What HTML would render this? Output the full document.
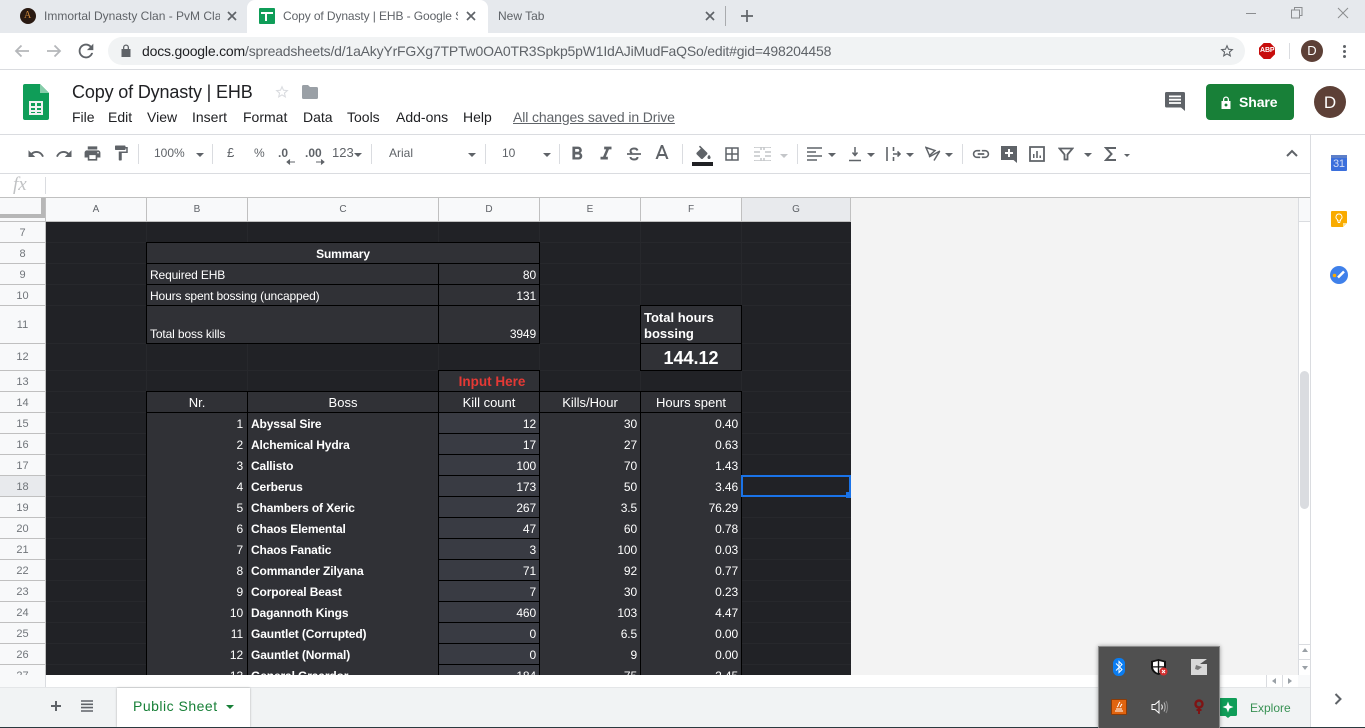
<!DOCTYPE html>
<html><head><meta charset="utf-8"><title>Copy of Dynasty | EHB</title>
<style>
html,body{margin:0;padding:0;width:1365px;height:728px;overflow:hidden;background:#fff;font-family:"Liberation Sans",sans-serif}
div,span,svg{position:absolute}
.t{white-space:nowrap;line-height:1}
svg{display:block}
.ic{fill:#5f6368}
.sep{width:1px;height:20px;top:144px;background:#dadce0}
.dd{width:0;height:0;border-left:4px solid transparent;border-right:4px solid transparent;border-top:4px solid #5f6368}
.m{top:109px;font-size:14px;color:#202124;white-space:nowrap;line-height:16px}
.ch{top:198px;height:23px;border-right:1px solid #c0c0c0;background:#f8f9fa;text-align:center;font-size:10px;line-height:24px;color:#5f6368;box-sizing:content-box}
.rh{left:0;width:45px;border-right:1px solid #c0c0c0;border-bottom:1px solid #c0c0c0;background:#f8f9fa;text-align:center;font-size:11px;color:#70757a}
.gv{top:222px;height:453px;width:1px;background:#27282c}
.gh{left:46px;width:805px;height:1px;background:#27282c}
.c{box-sizing:border-box;border:1px solid #000;background:#303136;color:#fff;font-size:12px;white-space:nowrap;overflow:hidden}
.x{color:#fff;font-size:12px;line-height:14px;white-space:nowrap;margin-top:1px;letter-spacing:-.13px}
.h{font-size:13px;line-height:15px;margin-top:0;letter-spacing:0;text-align:center}
.r{text-align:right}
.b{font-weight:bold}
.tb{top:146px;font-size:12px;color:#5f6368;white-space:nowrap;line-height:14px}
</style></head><body>

<!-- browser tabs -->
<div style="left:0;top:0;width:1365px;height:33px;background:#e6e9ed"></div>
<div style="left:247px;top:0;width:241px;height:33px;background:#fff;border-radius:8px 8px 0 0"></div>
<div style="left:20px;top:8px;width:16px;height:16px;border-radius:8px;background:#2a1a12"></div>
<div class="t" style="left:24px;top:11px;font-size:10px;color:#d08a3c;font-family:'Liberation Serif',serif">A</div>
<div class="t" style="left:44px;top:9px;width:176px;overflow:hidden;font-size:12px;line-height:14px;color:#5f6368">Immortal Dynasty Clan - PvM Clan</div>
<svg style="left:227px;top:11px" width="10" height="10"><path d="M1 1L9 9M9 1L1 9" stroke="#5f6368" stroke-width="1.7"/></svg>
<div style="left:259px;top:8px;width:16px;height:16px;background:#0f9d58;border-radius:1px"></div>
<div style="left:261px;top:12px;width:12px;height:2px;background:#fff"></div>
<div style="left:265px;top:12px;width:2px;height:9px;background:#fff"></div>
<div class="t" style="left:283px;top:9px;width:175px;overflow:hidden;font-size:12px;line-height:14px;letter-spacing:-.1px;color:#5f6368">Copy of Dynasty | EHB - Google Sheets</div>
<svg style="left:466px;top:11px" width="10" height="10"><path d="M1 1L9 9M9 1L1 9" stroke="#5f6368" stroke-width="1.7"/></svg>
<div class="t" style="left:498px;top:9px;font-size:12px;line-height:14px;color:#5f6368">New Tab</div>
<svg style="left:705px;top:11px" width="10" height="10"><path d="M1 1L9 9M9 1L1 9" stroke="#5f6368" stroke-width="1.7"/></svg>
<div style="left:725px;top:6px;width:1px;height:20px;background:#a9abae"></div>
<svg style="left:741px;top:10px" width="12" height="12"><path d="M6 0V12M0 6H12" stroke="#5f6368" stroke-width="1.7"/></svg>
<div style="left:1246px;top:13px;width:10px;height:1px;background:#8b8d90"></div>
<svg style="left:1291px;top:7px" width="12" height="12"><path d="M3.5 2.5V.5H11V8.500H9M.5 3H8.500V11H.5Z" fill="none" stroke="#8b8d90"/></svg>
<svg style="left:1337px;top:7px" width="12" height="12"><path d="M1 1L11 11M11 1L1 11" stroke="#8b8d90"/></svg>

<!-- address bar -->
<div style="left:0;top:33px;width:1365px;height:36px;background:#fff"></div>
<div style="left:0;top:69px;width:1365px;height:1px;background:#dadce0"></div>
<div style="left:108px;top:37px;width:1137px;height:28px;background:#f1f3f4;border-radius:14px"></div>
<svg style="left:14px;top:44px" width="16" height="14"><path d="M15 7H2M7.500 1.500L2 7l5.500 5.500" fill="none" stroke="#b5b7ba" stroke-width="1.800"/></svg>
<svg style="left:46px;top:44px" width="16" height="14"><path d="M1 7H14M8.500 1.500L14 7l-5.500 5.500" fill="none" stroke="#b5b7ba" stroke-width="1.800"/></svg>
<svg style="left:75px;top:40px" width="22" height="22" viewBox="0 0 24 24"><path fill="#5f6368" d="M17.650 6.350C16.200 4.900 14.210 4 12 4c-4.420 0-7.990 3.580-7.990 8s3.570 8 7.990 8c3.730 0 6.840-2.550 7.730-6h-2.080c-.82 2.330-3.040 4-5.650 4-3.310 0-6-2.690-6-6s2.690-6 6-6c1.660 0 3.140.69 4.220 1.780L13 11h7V4l-2.350 2.350z"/></svg>
<svg style="left:121px;top:44px" width="10" height="13"><path fill="#5f6368" d="M2 5V3.500a3 3 0 0 1 6 0V5h1.500v8H.5V5zM3.300 5h3.400V3.500a1.700 1.700 0 0 0-3.400 0z"/></svg>
<div class="t" style="left:142px;top:43px;font-size:14px;line-height:16px;letter-spacing:-.19px;color:#5f6368"><span style="position:static;color:#202124">docs.google.com</span>/spreadsheets/d/1aAkyYrFGXg7TPTw0OA0TR3Spkp5pW1IdAJiMudFaQSo/edit#gid=498204458</div>
<svg style="left:1219px;top:43px" width="16" height="16" viewBox="0 0 24 24"><path fill="#5f6368" d="M22 9.240l-7.190-.62L12 2 9.190 8.630 2 9.240l5.460 4.730L5.820 21 12 17.270 18.180 21l-1.630-7.030L22 9.240zM12 15.400l-3.760 2.270 1-4.280-3.320-2.880 4.380-.38L12 6.100l1.710 4.040 4.380.38-3.320 2.880 1 4.280L12 15.400z"/></svg>
<svg style="left:1259px;top:43px" width="16" height="16"><path fill="#c70d0c" d="M4.700 0h6.600L16 4.700v6.600L11.300 16H4.700L0 11.300V4.700z"/></svg>
<div class="t b" style="left:1260px;top:47px;font-size:7px;line-height:8px;font-weight:bold;letter-spacing:-.1px;color:#fff">ABP</div>
<div style="left:1289px;top:43px;width:1px;height:16px;background:#dadce0"></div>
<div style="left:1301px;top:40px;width:22px;height:22px;border-radius:11px;background:#5d4037;color:#fff;text-align:center;font-size:13px;line-height:22px">D</div>
<div style="left:1343px;top:45px;width:3px;height:3px;border-radius:2px;background:#5f6368"></div>
<div style="left:1343px;top:50px;width:3px;height:3px;border-radius:2px;background:#5f6368"></div>
<div style="left:1343px;top:55px;width:3px;height:3px;border-radius:2px;background:#5f6368"></div>

<!-- doc header -->
<svg style="left:23px;top:84px" width="26" height="36"><path fill="#0f9d58" d="M2 0H17L26 9V34a2 2 0 0 1-2 2H2a2 2 0 0 1-2-2V2a2 2 0 0 1 2-2z"/><path fill="#87cdaa" d="M17 0L26 9H17z"/><path fill="#f1f1f1" d="M6 17H20V31H6zM8 19V22H12V19zM14 19V22H18V19zM8 24V26H12V24zM14 24V26H18V24zM8 28V29H12V28zM14 28V29H18V28z" fill-rule="evenodd"/></svg>
<div style="left:72px;top:81px;font-size:18px;line-height:22px;letter-spacing:-.15px;color:#202124;white-space:nowrap">Copy of Dynasty | EHB</div>
<svg style="left:274px;top:84px" width="16" height="16" viewBox="0 0 24 24"><path fill="#dadce0" d="M22 9.240l-7.190-.62L12 2 9.190 8.630 2 9.240l5.460 4.730L5.820 21 12 17.270 18.180 21l-1.630-7.030L22 9.240zM12 15.400l-3.760 2.270 1-4.280-3.320-2.880 4.380-.38L12 6.100l1.710 4.040 4.380.38-3.320 2.880 1 4.280L12 15.400z"/></svg>
<svg style="left:302px;top:85px" width="16" height="14"><path fill="#9aa0a6" d="M1.500 0H6L8 2H14.500A1.500 1.500 0 0 1 16 3.500V12.500A1.500 1.500 0 0 1 14.500 14H1.500A1.500 1.500 0 0 1 0 12.500V1.500A1.500 1.500 0 0 1 1.500 0z"/></svg>
<div class="m" style="left:72px">File</div>
<div class="m" style="left:108px">Edit</div>
<div class="m" style="left:147px">View</div>
<div class="m" style="left:192px">Insert</div>
<div class="m" style="left:243px">Format</div>
<div class="m" style="left:303px">Data</div>
<div class="m" style="left:347px">Tools</div>
<div class="m" style="left:396px">Add-ons</div>
<div class="m" style="left:463px">Help</div>
<div class="m" style="left:513px;color:#5f6368;letter-spacing:-.12px;text-decoration:underline">All changes saved in Drive</div>
<svg style="left:1165px;top:92px" width="20" height="20"><path fill="#5f6368" d="M1.500 0H18.500A1.500 1.500 0 0 1 20 1.500V19L16 15.500H1.500A1.500 1.500 0 0 1 0 14V1.500A1.500 1.500 0 0 1 1.500 0z"/><path fill="#fff" d="M4 3.500H16V5.300H4zM4 6.800H16V8.600H4zM4 10.100H16V11.900H4z"/></svg>
<div style="left:1206px;top:84px;width:88px;height:36px;background:#188038;border-radius:4px"></div>
<svg style="left:1221px;top:96px" width="10" height="13"><path fill="#fff" d="M2 5V3.500a3 3 0 0 1 6 0V5h1.500v8H.5V5zM3.300 5h3.400V3.500a1.700 1.700 0 0 0-3.400 0zM5 7.500a1.500 1.500 0 1 0 .01 0z" fill-rule="evenodd"/></svg>
<div style="left:1239px;top:94px;font-size:14px;line-height:16px;font-weight:bold;letter-spacing:-.1px;color:#fff">Share</div>
<div style="left:1314px;top:86px;width:32px;height:32px;border-radius:16px;background:#5d4037;color:#fff;text-align:center;font-size:17px;line-height:33px">D</div>
<div style="left:0;top:134px;width:1365px;height:1px;background:#dadce0"></div>

<!-- toolbar -->
<svg class="ic" style="left:27px;top:145px" width="18" height="18" viewBox="0 0 24 24"><path d="M12.500 8c-2.650 0-5.050.99-6.900 2.600L2 7v9h9l-3.620-3.620c1.390-1.160 3.160-1.880 5.120-1.880 3.540 0 6.550 2.310 7.600 5.500l2.370-.78C21.080 11.030 17.150 8 12.500 8z"/></svg>
<svg class="ic" style="left:55px;top:145px" width="18" height="18" viewBox="0 0 24 24"><path d="M18.400 10.600C16.550 8.990 14.150 8 11.500 8c-4.650 0-8.580 3.030-9.960 7.220L3.900 16c1.050-3.190 4.050-5.500 7.600-5.500 1.950 0 3.730.72 5.120 1.880L13 16h9V7l-3.600 3.600z"/></svg>
<svg class="ic" style="left:83px;top:144px" width="19" height="19" viewBox="0 0 24 24"><path d="M19 8H5c-1.660 0-3 1.340-3 3v6h4v4h12v-4h4v-6c0-1.660-1.340-3-3-3zm-3 11H8v-5h8v5zm3-7c-.55 0-1-.45-1-1s.45-1 1-1 1 .45 1 1-.45 1-1 1zm-1-9H6v4h12V3z"/></svg>
<svg class="ic" style="left:112px;top:144px" width="18" height="18" viewBox="0 0 24 24"><path d="M18 4V3c0-.55-.45-1-1-1H5c-.55 0-1 .45-1 1v4c0 .55.45 1 1 1h12c.55 0 1-.45 1-1V6h1v4H9v11c0 .55.45 1 1 1h2c.55 0 1-.45 1-1v-9h8V4h-3z"/></svg>
<div class="sep" style="left:138px"></div>
<div class="tb" style="left:154px">100%</div>
<div class="dd" style="left:196px;top:153px"></div>
<div class="sep" style="left:212px"></div>
<div class="tb" style="left:227px;font-size:13px">£</div>
<div class="tb" style="left:254px;font-size:12px">%</div>
<div class="tb" style="left:278px;font-size:12px;font-weight:bold">.0</div>
<svg style="left:286px;top:159px" width="9" height="6"><path d="M9 3H2M4 .5L1 3l3 2.500" fill="#5f6368" stroke="#5f6368"/></svg>
<div class="tb" style="left:305px;font-size:12px;font-weight:bold">.00</div>
<svg style="left:316px;top:159px" width="9" height="6"><path d="M0 3H7M5 .5L8 3 5 5.500" fill="#5f6368" stroke="#5f6368"/></svg>
<div class="tb" style="left:332px;font-size:13px">123</div>
<div class="dd" style="left:354px;top:153px"></div>
<div class="sep" style="left:371px"></div>
<div class="tb" style="left:389px">Arial</div>
<div class="dd" style="left:468px;top:153px"></div>
<div class="sep" style="left:485px"></div>
<div class="tb" style="left:502px">10</div>
<div class="dd" style="left:543px;top:153px"></div>
<div class="sep" style="left:559px"></div>
<svg class="ic" style="left:566px;top:143px" width="22" height="22" viewBox="0 0 24 24"><path d="M15.600 10.790c.97-.67 1.650-1.770 1.650-2.790 0-2.260-1.750-4-4-4H7v14h7.040c2.090 0 3.710-1.700 3.710-3.790 0-1.520-.86-2.820-2.150-3.420zM10 6.500h3c.83 0 1.500.67 1.500 1.500s-.67 1.500-1.500 1.500h-3v-3zm3.500 9H10v-3h3.500c.83 0 1.500.67 1.500 1.500s-.67 1.500-1.500 1.500z"/></svg>
<svg class="ic" style="left:595px;top:143px" width="22" height="22" viewBox="0 0 24 24"><path d="M10 4v3h2.210l-3.420 8H6v3h8v-3h-2.210l3.420-8H18V4z"/></svg>
<svg style="left:626px;top:146px" width="16" height="16"><path d="M11.500 4.500C11 3 9.500 2.500 8 2.500 6 2.500 4.500 3.500 4.500 5c0 1 .6 1.700 1.500 2.200M11.500 11C11.500 12.700 10 13.500 8 13.500 6 13.500 4.500 12.500 4.500 11" fill="none" stroke="#5f6368" stroke-width="2"/><path d="M1 8H15" stroke="#5f6368" stroke-width="1.700"/></svg>
<svg class="ic" style="left:650px;top:142px" width="24" height="24" viewBox="0 0 24 24"><path d="M11 3L5.500 17h2.250l1.120-3h6.250l1.120 3h2.250L13 3h-2zm-1.380 9L12 5.670 14.380 12H9.620z"/></svg>
<div class="sep" style="left:682px"></div>
<svg class="ic" style="left:694px;top:145px" width="19" height="17" viewBox="0 0 24 20"><path d="M16.560 8.940L7.620 0 6.210 1.410l2.380 2.380-5.150 5.150c-.59.59-.59 1.540 0 2.120l5.500 5.500c.29.29.68.44 1.060.44s.77-.15 1.060-.44l5.500-5.500c.59-.58.59-1.530 0-2.120zM19 11.500s-2 2.170-2 3.500c0 1.100.9 2 2 2s2-.9 2-2c0-1.330-2-3.500-2-3.500z"/></svg>
<div style="left:692px;top:162px;width:21px;height:4px;background:#202124"></div>
<svg class="ic" style="left:723px;top:145px" width="18" height="18" viewBox="0 0 24 24"><path d="M3 3v18h18V3H3zm8 16H5v-6h6v6zm0-8H5V5h6v6zm8 8h-6v-6h6v6zm0-8h-6V5h6v6z"/></svg>
<svg style="left:754px;top:147px" width="17" height="14"><path d="M0 1V0H17V1M0 13V14H17V13M7 0V3M10 0V3M7 11V14M10 11V14M0 5H6M11 5H17M0 9H6M11 9H17" fill="none" stroke="#c4c6c9" stroke-width="1.500"/></svg>
<div class="dd" style="left:780px;top:154px;border-top-color:#c4c6c9"></div>
<div class="sep" style="left:797px"></div>
<svg style="left:807px;top:147px" width="15" height="14"><path d="M0 1H15M0 5H9M0 9H15M0 13H10" stroke="#5f6368" stroke-width="1.600"/></svg>
<div class="dd" style="left:828px;top:153px"></div>
<svg style="left:848px;top:146px" width="14" height="16"><path d="M7 1V8.500M4.500 6.500L7 9.500 9.500 6.500M1 14.500H13" fill="none" stroke="#5f6368" stroke-width="1.500"/></svg>
<div class="dd" style="left:867px;top:153px"></div>
<svg style="left:886px;top:146px" width="15" height="16"><path d="M1 1V15M7.500 1V5M7.500 11V15M7 8H14M11.500 5.500L14 8 11.500 10.500" fill="none" stroke="#5f6368" stroke-width="1.600"/></svg>
<div class="dd" style="left:906px;top:153px"></div>
<svg style="left:925px;top:146px" width="16" height="16"><path d="M1 1.500L10 4.500 4.500 9.500zM4 11L15 5M9 14.500L14.500 5.500" fill="none" stroke="#5f6368" stroke-width="1.500"/></svg>
<div class="dd" style="left:945px;top:153px"></div>
<div class="sep" style="left:962px"></div>
<svg class="ic" style="left:971px;top:145px" width="20" height="18" viewBox="0 0 24 22"><path d="M3.900 11c0-1.710 1.390-3.100 3.100-3.100h4V6H7c-2.760 0-5 2.240-5 5s2.240 5 5 5h4v-1.900H7c-1.710 0-3.100-1.390-3.100-3.100zM8 12h8v-2H8v2zm9-6h-4v1.900h4c1.710 0 3.100 1.390 3.100 3.100s-1.390 3.100-3.100 3.100h-4V16h4c2.760 0 5-2.240 5-5s-2.240-5-5-5z"/></svg>
<svg style="left:1001px;top:146px" width="16" height="17"><path fill="#5f6368" d="M0 0H16V17L12.500 14H0z"/><path d="M8 3V11M4 7H12" stroke="#fff" stroke-width="2"/></svg>
<svg style="left:1029px;top:146px" width="16" height="16"><path d="M1 1H15V15H1z" fill="none" stroke="#5f6368" stroke-width="1.800"/><path d="M4 8H5.500V12H4zM7.200 5H8.800V12H7.200zM10.500 9.500H12V12H10.500z" fill="#5f6368"/></svg>
<svg style="left:1058px;top:147px" width="16" height="14"><path d="M1.500 1.500H14.500L9.500 7.500V12.500H6.500V7.500Z" fill="none" stroke="#5f6368" stroke-width="1.800"/></svg>
<div class="dd" style="left:1084px;top:153px"></div>
<svg style="left:1104px;top:146px" width="13" height="16"><path d="M12 2H2L7.500 8 2 14H12" fill="none" stroke="#5f6368" stroke-width="2"/></svg>
<div class="dd" style="left:1124px;top:154px;border-left-width:3px;border-right-width:3px;border-top-width:3px"></div>
<svg style="left:1286px;top:149px" width="12" height="9"><path d="M1 7L6 2 11 7" fill="none" stroke="#5f6368" stroke-width="2"/></svg>
<div style="left:0;top:173px;width:1310px;height:1px;background:#dadce0"></div>

<!-- formula bar -->
<div style="left:13px;top:175px;font-family:'Liberation Serif',serif;font-style:italic;font-size:19px;line-height:20px;color:#c0c2c4">fx</div>
<div style="left:45px;top:177px;width:1px;height:17px;background:#dadce0"></div>
<div style="left:0;top:197px;width:1310px;height:1px;background:#c0c0c0"></div>

<!-- column headers -->
<div style="left:0;top:198px;width:46px;height:23px;background:#f8f9fa"></div>
<div style="left:41px;top:198px;width:4px;height:20px;background:#b7b7b7"></div>
<div style="left:0;top:214px;width:45px;height:4px;background:#b7b7b7"></div>
<div style="left:45px;top:198px;width:1px;height:24px;background:#c0c0c0"></div>
<div class="ch" style="left:46px;width:100px">A</div>
<div class="ch" style="left:147px;width:100px">B</div>
<div class="ch" style="left:248px;width:190px">C</div>
<div class="ch" style="left:439px;width:100px">D</div>
<div class="ch" style="left:540px;width:100px">E</div>
<div class="ch" style="left:641px;width:100px">F</div>
<div class="ch" style="left:742px;width:108px;background:#e8eaed">G</div>
<div style="left:0;top:221px;width:851px;height:1px;background:#c0c0c0"></div>

<!-- grey outside area -->
<div style="left:851px;top:198px;width:447px;height:477px;background:#f3f3f3"></div>
<div style="left:851px;top:197px;width:447px;height:1px;background:#c0c0c0"></div>

<!-- vertical scrollbar -->
<div style="left:1298px;top:198px;width:12px;height:477px;background:#fff"></div>
<div style="left:1298px;top:198px;width:12px;height:23px;background:#f8f9fa"></div>
<div style="left:1298px;top:221px;width:12px;height:1px;background:#dadce0"></div>
<div style="left:1298px;top:198px;width:1px;height:489px;background:#dadce0"></div>
<div style="left:1300px;top:371px;width:9px;height:138px;border-radius:5px;background:#dadce0"></div>
<div style="left:1299px;top:644px;width:11px;height:1px;background:#dadce0"></div>
<div style="left:1299px;top:659px;width:11px;height:1px;background:#dadce0"></div>
<div style="left:1302px;top:648px;width:0;height:0;border-left:3px solid transparent;border-right:3px solid transparent;border-bottom:4px solid #9aa0a6"></div>
<div style="left:1302px;top:666px;width:0;height:0;border-left:3px solid transparent;border-right:3px solid transparent;border-top:4px solid #9aa0a6"></div>

<!-- row headers -->
<div class="rh" style="top:222px;height:20px;line-height:22px">7</div>
<div class="rh" style="top:243px;height:20px;line-height:22px">8</div>
<div class="rh" style="top:264px;height:20px;line-height:22px">9</div>
<div class="rh" style="top:285px;height:20px;line-height:22px">10</div>
<div class="rh" style="top:306px;height:37px;line-height:38px">11</div>
<div class="rh" style="top:344px;height:26px;line-height:27px">12</div>
<div class="rh" style="top:371px;height:20px;line-height:22px">13</div>
<div class="rh" style="top:392px;height:20px;line-height:22px">14</div>
<div class="rh" style="top:413px;height:20px;line-height:22px">15</div>
<div class="rh" style="top:434px;height:20px;line-height:22px">16</div>
<div class="rh" style="top:455px;height:20px;line-height:22px">17</div>
<div class="rh" style="top:476px;height:20px;line-height:22px;background:#e8eaed">18</div>
<div class="rh" style="top:497px;height:20px;line-height:22px">19</div>
<div class="rh" style="top:518px;height:20px;line-height:22px">20</div>
<div class="rh" style="top:539px;height:20px;line-height:22px">21</div>
<div class="rh" style="top:560px;height:20px;line-height:22px">22</div>
<div class="rh" style="top:581px;height:20px;line-height:22px">23</div>
<div class="rh" style="top:602px;height:20px;line-height:22px">24</div>
<div class="rh" style="top:623px;height:20px;line-height:22px">25</div>
<div class="rh" style="top:644px;height:20px;line-height:22px">26</div>
<div style="left:0;top:665px;width:46px;height:10px;overflow:hidden"><div class="rh" style="top:0;height:20px;line-height:22px">27</div></div>

<!-- dark grid -->
<div style="left:46px;top:222px;width:805px;height:453px;background:#212226;overflow:hidden" id="g">
<div class="gv" style="left:100px;top:0"></div><div class="gv" style="left:201px;top:0"></div><div class="gv" style="left:392px;top:0"></div><div class="gv" style="left:493px;top:0"></div><div class="gv" style="left:594px;top:0"></div><div class="gv" style="left:695px;top:0"></div>
<div class="gh" style="left:0;top:20px"></div><div class="gh" style="left:0;top:41px"></div><div class="gh" style="left:0;top:62px"></div><div class="gh" style="left:0;top:83px"></div><div class="gh" style="left:0;top:121px"></div><div class="gh" style="left:0;top:148px"></div><div class="gh" style="left:0;top:169px"></div><div class="gh" style="left:0;top:190px"></div><div class="gh" style="left:0;top:211px"></div><div class="gh" style="left:0;top:232px"></div><div class="gh" style="left:0;top:253px"></div><div class="gh" style="left:0;top:274px"></div><div class="gh" style="left:0;top:295px"></div><div class="gh" style="left:0;top:316px"></div><div class="gh" style="left:0;top:337px"></div><div class="gh" style="left:0;top:358px"></div><div class="gh" style="left:0;top:379px"></div><div class="gh" style="left:0;top:400px"></div><div class="gh" style="left:0;top:421px"></div><div class="gh" style="left:0;top:442px"></div>

<!-- summary (coords relative to grid: x-46, y-222) -->
<div class="c" style="left:100px;top:20px;width:394px;height:22px"></div>
<div class="c" style="left:100px;top:41px;width:293px;height:22px"></div>
<div class="c" style="left:392px;top:41px;width:102px;height:22px"></div>
<div class="c" style="left:100px;top:62px;width:293px;height:22px"></div>
<div class="c" style="left:392px;top:62px;width:102px;height:22px"></div>
<div class="c" style="left:100px;top:83px;width:293px;height:39px"></div>
<div class="c" style="left:392px;top:83px;width:102px;height:39px"></div>
<div class="c" style="left:594px;top:83px;width:102px;height:39px"></div>
<div class="c" style="left:594px;top:121px;width:102px;height:28px"></div>
<div class="c" style="left:392px;top:148px;width:102px;height:22px"></div>
<div class="c" style="left:100px;top:169px;width:102px;height:22px"></div>
<div class="c" style="left:201px;top:169px;width:192px;height:22px"></div>
<div class="c" style="left:392px;top:169px;width:102px;height:22px"></div>
<div class="c" style="left:493px;top:169px;width:102px;height:22px"></div>
<div class="c" style="left:594px;top:169px;width:102px;height:22px"></div>
<div class="c" style="left:100px;top:190px;width:102px;height:280px"></div>
<div class="c" style="left:201px;top:190px;width:192px;height:280px"></div>
<div class="c" style="left:493px;top:190px;width:102px;height:280px"></div>
<div class="c" style="left:594px;top:190px;width:102px;height:280px"></div>
<div class="c" style="left:392px;top:190px;width:102px;height:22px;background:#393b43"></div>
<div class="c" style="left:392px;top:211px;width:102px;height:22px;background:#393b43"></div>
<div class="c" style="left:392px;top:232px;width:102px;height:22px;background:#393b43"></div>
<div class="c" style="left:392px;top:253px;width:102px;height:22px;background:#393b43"></div>
<div class="c" style="left:392px;top:274px;width:102px;height:22px;background:#393b43"></div>
<div class="c" style="left:392px;top:295px;width:102px;height:22px;background:#393b43"></div>
<div class="c" style="left:392px;top:316px;width:102px;height:22px;background:#393b43"></div>
<div class="c" style="left:392px;top:337px;width:102px;height:22px;background:#393b43"></div>
<div class="c" style="left:392px;top:358px;width:102px;height:22px;background:#393b43"></div>
<div class="c" style="left:392px;top:379px;width:102px;height:22px;background:#393b43"></div>
<div class="c" style="left:392px;top:400px;width:102px;height:22px;background:#393b43"></div>
<div class="c" style="left:392px;top:421px;width:102px;height:22px;background:#393b43"></div>
<div class="c" style="left:392px;top:442px;width:102px;height:22px;background:#393b43"></div>

<div class="x b" style="left:101px;width:392px;top:24px;text-align:center">Summary</div>
<div class="x" style="left:104px;top:45px">Required EHB</div>
<div class="x r" style="left:393px;width:97px;top:45px">80</div>
<div class="x" style="left:104px;top:66px">Hours spent bossing (uncapped)</div>
<div class="x r" style="left:393px;width:97px;top:66px">131</div>
<div class="x" style="left:104px;top:104px">Total boss kills</div>
<div class="x r" style="left:393px;width:97px;top:104px">3949</div>
<div class="x b" style="left:598px;top:88px;font-size:13px;line-height:16px;margin-top:0;letter-spacing:0">Total hours<br>bossing</div>
<div class="x b" style="left:595px;width:100px;top:125px;text-align:center;font-size:18px;line-height:21px;letter-spacing:0">144.12</div>
<div class="x b" style="left:396px;width:100px;top:152px;text-align:center;color:#e53935;font-size:13.5px;letter-spacing:0">Input Here</div>
<div class="x h" style="left:101px;width:100px;top:173px">Nr.</div>
<div class="x h" style="left:202px;width:190px;top:173px">Boss</div>
<div class="x h" style="left:393px;width:100px;top:173px">Kill count</div>
<div class="x h" style="left:494px;width:100px;top:173px">Kills/Hour</div>
<div class="x h" style="left:595px;width:100px;top:173px">Hours spent</div>

<div class="x r" style="left:100px;width:97px;top:194px">1</div><div class="x b" style="left:205px;top:194px">Abyssal Sire</div><div class="x r" style="left:393px;width:97px;top:194px">12</div><div class="x r" style="left:494px;width:97px;top:194px">30</div><div class="x r" style="left:595px;width:97px;top:194px">0.40</div>
<div class="x r" style="left:100px;width:97px;top:215px">2</div><div class="x b" style="left:205px;top:215px">Alchemical Hydra</div><div class="x r" style="left:393px;width:97px;top:215px">17</div><div class="x r" style="left:494px;width:97px;top:215px">27</div><div class="x r" style="left:595px;width:97px;top:215px">0.63</div>
<div class="x r" style="left:100px;width:97px;top:236px">3</div><div class="x b" style="left:205px;top:236px">Callisto</div><div class="x r" style="left:393px;width:97px;top:236px">100</div><div class="x r" style="left:494px;width:97px;top:236px">70</div><div class="x r" style="left:595px;width:97px;top:236px">1.43</div>
<div class="x r" style="left:100px;width:97px;top:257px">4</div><div class="x b" style="left:205px;top:257px">Cerberus</div><div class="x r" style="left:393px;width:97px;top:257px">173</div><div class="x r" style="left:494px;width:97px;top:257px">50</div><div class="x r" style="left:595px;width:97px;top:257px">3.46</div>
<div class="x r" style="left:100px;width:97px;top:278px">5</div><div class="x b" style="left:205px;top:278px">Chambers of Xeric</div><div class="x r" style="left:393px;width:97px;top:278px">267</div><div class="x r" style="left:494px;width:97px;top:278px">3.5</div><div class="x r" style="left:595px;width:97px;top:278px">76.29</div>
<div class="x r" style="left:100px;width:97px;top:299px">6</div><div class="x b" style="left:205px;top:299px">Chaos Elemental</div><div class="x r" style="left:393px;width:97px;top:299px">47</div><div class="x r" style="left:494px;width:97px;top:299px">60</div><div class="x r" style="left:595px;width:97px;top:299px">0.78</div>
<div class="x r" style="left:100px;width:97px;top:320px">7</div><div class="x b" style="left:205px;top:320px">Chaos Fanatic</div><div class="x r" style="left:393px;width:97px;top:320px">3</div><div class="x r" style="left:494px;width:97px;top:320px">100</div><div class="x r" style="left:595px;width:97px;top:320px">0.03</div>
<div class="x r" style="left:100px;width:97px;top:341px">8</div><div class="x b" style="left:205px;top:341px">Commander Zilyana</div><div class="x r" style="left:393px;width:97px;top:341px">71</div><div class="x r" style="left:494px;width:97px;top:341px">92</div><div class="x r" style="left:595px;width:97px;top:341px">0.77</div>
<div class="x r" style="left:100px;width:97px;top:362px">9</div><div class="x b" style="left:205px;top:362px">Corporeal Beast</div><div class="x r" style="left:393px;width:97px;top:362px">7</div><div class="x r" style="left:494px;width:97px;top:362px">30</div><div class="x r" style="left:595px;width:97px;top:362px">0.23</div>
<div class="x r" style="left:100px;width:97px;top:383px">10</div><div class="x b" style="left:205px;top:383px">Dagannoth Kings</div><div class="x r" style="left:393px;width:97px;top:383px">460</div><div class="x r" style="left:494px;width:97px;top:383px">103</div><div class="x r" style="left:595px;width:97px;top:383px">4.47</div>
<div class="x r" style="left:100px;width:97px;top:404px">11</div><div class="x b" style="left:205px;top:404px">Gauntlet (Corrupted)</div><div class="x r" style="left:393px;width:97px;top:404px">0</div><div class="x r" style="left:494px;width:97px;top:404px">6.5</div><div class="x r" style="left:595px;width:97px;top:404px">0.00</div>
<div class="x r" style="left:100px;width:97px;top:425px">12</div><div class="x b" style="left:205px;top:425px">Gauntlet (Normal)</div><div class="x r" style="left:393px;width:97px;top:425px">0</div><div class="x r" style="left:494px;width:97px;top:425px">9</div><div class="x r" style="left:595px;width:97px;top:425px">0.00</div>
<div class="x r" style="left:100px;width:97px;top:446px">13</div><div class="x b" style="left:205px;top:446px">General Graardor</div><div class="x r" style="left:393px;width:97px;top:446px">184</div><div class="x r" style="left:494px;width:97px;top:446px">75</div><div class="x r" style="left:595px;width:97px;top:446px">2.45</div>

<!-- selection (G18) -->
<div style="left:695px;top:253px;width:110px;height:22px;box-sizing:border-box;border:2px solid #1a73e8"></div>
<div style="left:800px;top:270px;width:6px;height:6px;background:#1a73e8"></div>
</div>

<!-- horizontal scrollbar -->
<div style="left:0;top:675px;width:1310px;height:12px;background:#fff"></div>
<div style="left:0;top:675px;width:46px;height:12px;background:#f8f9fa;border-right:1px solid #dadce0;box-sizing:border-box"></div>
<div style="left:1266px;top:675px;width:1px;height:12px;background:#dadce0"></div>
<div style="left:1282px;top:675px;width:1px;height:12px;background:#dadce0"></div>
<div style="left:1298px;top:675px;width:12px;height:12px;background:#f8f9fa"></div>
<div style="left:1272px;top:678px;width:0;height:0;border-top:3px solid transparent;border-bottom:3px solid transparent;border-right:4px solid #9aa0a6"></div>
<div style="left:1288px;top:678px;width:0;height:0;border-top:3px solid transparent;border-bottom:3px solid transparent;border-left:4px solid #9aa0a6"></div>

<!-- sheet tabs -->
<div style="left:0;top:687px;width:1310px;height:40px;background:#f1f3f4"></div>
<div style="left:0;top:687px;width:1310px;height:1px;background:#e4e6e8"></div>
<svg style="left:50px;top:700px" width="12" height="12"><path d="M6 1V11M1 6H11" stroke="#5f6368" stroke-width="2"/></svg>
<svg style="left:81px;top:700px" width="12" height="12"><path d="M0 1H12M0 4.300H12M0 7.600H12M0 11H12" stroke="#5f6368" stroke-width="1.600"/></svg>
<div style="left:117px;top:688px;width:133px;height:39px;background:#fff;box-shadow:0 0 2px rgba(0,0,0,.3)"></div>
<div style="left:133px;top:698px;font-size:14px;line-height:16px;color:#188038;white-space:nowrap;letter-spacing:.5px">Public Sheet</div>
<div class="dd" style="left:226px;top:705px;border-top-color:#188038"></div>

<!-- explore -->
<svg style="left:1219px;top:698px" width="18" height="20"><path fill="#0f9d58" d="M1.500 0H16.500A1.500 1.500 0 0 1 18 1.500V16.500A1.500 1.500 0 0 1 16.500 18H11.500L9 20 6.500 18H1.500A1.500 1.500 0 0 1 0 16.500V1.500A1.500 1.500 0 0 1 1.500 0z"/><path fill="#fff" d="M9 3.500L10.500 7.500 14.500 9 10.500 10.500 9 14.500 7.500 10.500 3.500 9 7.500 7.500z"/></svg>
<div style="left:1250px;top:701px;font-size:12px;line-height:14px;color:#188038;white-space:nowrap;opacity:.85">Explore</div>

<!-- side panel -->
<div style="left:1311px;top:135px;width:54px;height:593px;background:#fff"></div>
<div style="left:1310px;top:135px;width:1px;height:592px;background:#dadce0"></div>
<div style="left:1331px;top:155px;width:16px;height:16px;background:#3b6fdc;border-radius:1px"></div>
<div style="left:1331px;top:155px;width:16px;height:3px;background:#5d7fc8"></div>
<div class="t" style="left:1333px;top:159px;font-size:11px;line-height:11px;letter-spacing:-.2px;color:#d5def5">31</div>
<svg style="left:1331px;top:211px" width="16" height="16"><path fill="#f9ab00" d="M1 0H15A1 1 0 0 1 16 1V12L12 16H1A1 1 0 0 1 0 15V1A1 1 0 0 1 1 0z"/><path fill="#fde293" d="M16 12L12 16V12z"/><path d="M8 3a3 3 0 0 0-1.500 5.600V10H9.500V8.600A3 3 0 0 0 8 3zM6.800 11.500H9.200" fill="none" stroke="#fff" stroke-width=".9"/></svg>
<svg style="left:1330px;top:266px" width="18" height="18"><circle cx="9" cy="9" r="9" fill="#3f80ea"/><path d="M8 11.500L14 5.500" stroke="#fff" stroke-width="2.500"/><circle cx="4.500" cy="9.500" r="1.800" fill="#f9ab00"/></svg>
<svg style="left:1334px;top:693px" width="8" height="12"><path d="M1.500 1L6.500 6 1.500 11" fill="none" stroke="#5f6368" stroke-width="2"/></svg>

<!-- bottom line -->
<div style="left:0;top:727px;width:1365px;height:1px;background:#2b3a3f"></div>

<!-- system tray popup -->
<div style="left:1098px;top:646px;width:122px;height:82px;box-sizing:border-box;background:#505050;border:1px solid #8a8a8a;border-bottom:0;box-shadow:0 0 4px rgba(0,0,0,.35)"></div>
<svg style="left:1113px;top:658px" width="12" height="18"><rect x="0" y="0" width="12" height="18" rx="5.500" fill="#0a7df2"/><path d="M3 5.500L9 11.500 6 14.500V3.500L9 6.500 3 12.500" fill="none" stroke="#fff"/></svg>
<svg style="left:1151px;top:659px" width="17" height="17"><path fill="#111" d="M7.500 0L15 2V8C15 12 11.500 15 7.500 16 3.500 15 0 12 0 8V2z"/><path fill="#fff" d="M2 3.200L6.800 2V7.200H2zM8.200 8.500H13C12.500 11 10.500 13 8.200 14zM8.200 2L13 3.200V7.200H8.200zM2 8.500H6.800V14C4.500 13 2.500 11 2 8.500z"/><circle cx="12.500" cy="12.500" r="4" fill="#d32f2f"/><path d="M11 11L14 14M14 11L11 14" stroke="#fff"/></svg>
<svg style="left:1191px;top:659px" width="16" height="16"><path fill="#d8d8d8" d="M0 0H16L9 5H16V16H0z"/><path fill="#7a7a7a" d="M5 6L11 8 7 11 4 10z"/></svg>
<div style="left:1111px;top:699px;width:16px;height:16px;background:#e0640f;border:1px solid #8a3b08;box-sizing:border-box;border-radius:1px"></div>
<svg style="left:1113px;top:701px" width="12" height="12"><path d="M2 10H10M3 8H9M4 6C6 5 5 3 7 1M7 6C8 5 8 4 9 3" fill="none" stroke="#fff" stroke-width="1"/></svg>
<svg style="left:1151px;top:699px" width="17" height="16"><path d="M1 5.500H4L8 2V14L4 10.500H1z" fill="none" stroke="#fff"/><path d="M10.500 5.500C11.500 7 11.500 9 10.500 10.500" fill="none" stroke="#fff"/><path d="M13 3.500C14.500 6 14.500 10 13 12.500" fill="none" stroke="#bbb"/><path d="M15 2C17 5.500 17 10.500 15 14" fill="none" stroke="#888"/></svg>
<svg style="left:1194px;top:699px" width="10" height="16"><circle cx="5" cy="5" r="3.500" fill="none" stroke="#7e1414" stroke-width="2.400"/><path d="M5 8V15M2.500 11H7.500" stroke="#7e1414" stroke-width="2"/></svg>

</body></html>
